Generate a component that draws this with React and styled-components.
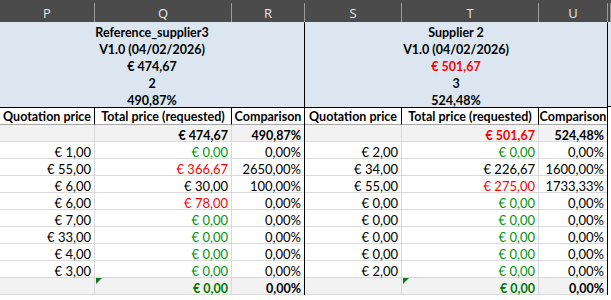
import React from "react";
import styled, { createGlobalStyle } from "styled-components";

const GlobalStyle = createGlobalStyle`
    * {
        box-sizing: border-box;
    }
    body {
        margin: 0;
        background: #ffffff;
        font-family: Lato, "Liberation Sans", Arial, sans-serif;
        font-size: 13px;
        color: #000000;
        overflow: hidden;
    }
`;

const Sheet = styled.div`
    width: 611px;
    height: 300px;
    background: #ffffff;
    overflow: hidden;
`;

const ColumnBar = styled.div`
    display: grid;
    grid-template-columns: 95px 137px 73px 97px 137px 69px 3px;
    height: 22px;
    background: #4b4b4b;
`;

const ColumnLetter = styled.div`
    display: flex;
    align-items: center;
    justify-content: center;
    color: #e6e6e6;
    font-family: "Open Sans", "Liberation Sans", sans-serif;
    font-size: 13px;
    border-right: 1px solid #9c9c9c;
    margin-top: 3px;
    height: 19px;
`;

const Body = styled.div`
    display: flex;
`;

const Group = styled.div`
    display: grid;
    grid-template-columns: ${p => p.$cols};
    border-right: 1px solid #000000;
`;

const Banner = styled.div`
    grid-column: 1 / -1;
    background: #dce6f1;
    border-bottom: 1px solid #000000;
    display: flex;
    flex-direction: column;
`;

const BannerLine = styled.div`
    height: 17px;
    line-height: 17px;
    text-align: center;
    font-weight: bold;
    font-size: 12.5px;
    color: ${p => (p.$red ? "#ff0000" : "#000000")};
    padding-top: 2px;
`;

const HeadCell = styled.div`
    height: 17px;
    line-height: 16px;
    font-weight: bold;
    font-size: 12.5px;
    text-align: center;
    white-space: nowrap;
    overflow: hidden;
    padding-top: 1px;
    border-right: ${p => (p.$last ? "none" : "1px solid #000000")};
    border-bottom: 1px solid #a6a6a6;
`;

const Cell = styled.div`
    height: 17px;
    line-height: 17px;
    padding: 2px 3px 0 3px;
    text-align: right;
    white-space: nowrap;
    position: relative;
    font-weight: ${p => (p.$bold ? "bold" : "normal")};
    font-size: ${p => (p.$bold ? "12.5px" : "13px")};
    background: ${p => (p.$shade ? "#f2f2f2" : "#ffffff")};
    border-bottom: 1px solid #d9d9d9;
    border-right: ${p => (p.$last ? "none" : "1px solid #d9d9d9")};
    color: ${p =>
        p.$tone === "red"
            ? "#ff0000"
            : p.$tone === "green"
            ? p.$bold
                ? "#007a00"
                : "#00960c"
            : "#000000"};
`;

const Flag = styled.span`
    position: absolute;
    left: 1px;
    top: 0;
    width: 0;
    height: 0;
    border-top: 6px solid #0c7a1c;
    border-right: 6px solid transparent;
`;

const Stub = styled.div`
    flex: 1;
`;

const StubBlue = styled.div`
    height: 85px;
    background: #dce6f1;
    border-bottom: 1px solid #000000;
`;

const groups = [
    {
        cols: "95px 137px 72px",
        banner: ["Reference_supplier3", "V1.0 (04/02/2026)", "€ 474,67", "2", "490,87%"],
        redTotal: false,
        total: "€ 474,67",
        totalPct: "490,87%",
        rows: [
            ["€ 1,00", "€ 0,00", "green", "0,00%"],
            ["€ 55,00", "€ 366,67", "red", "2650,00%"],
            ["€ 6,00", "€ 30,00", "", "100,00%"],
            ["€ 6,00", "€ 78,00", "red", "0,00%"],
            ["€ 7,00", "€ 0,00", "green", "0,00%"],
            ["€ 33,00", "€ 0,00", "green", "0,00%"],
            ["€ 4,00", "€ 0,00", "green", "0,00%"],
            ["€ 3,00", "€ 0,00", "green", "0,00%"],
        ],
    },
    {
        cols: "97px 137px 68px",
        banner: ["Supplier 2", "V1.0 (04/02/2026)", "€ 501,67", "3", "524,48%"],
        redTotal: true,
        total: "€ 501,67",
        totalPct: "524,48%",
        rows: [
            ["€ 2,00", "€ 0,00", "green", "0,00%"],
            ["€ 34,00", "€ 226,67", "", "1600,00%"],
            ["€ 55,00", "€ 275,00", "red", "1733,33%"],
            ["€ 0,00", "€ 0,00", "green", "0,00%"],
            ["€ 0,00", "€ 0,00", "green", "0,00%"],
            ["€ 0,00", "€ 0,00", "green", "0,00%"],
            ["€ 0,00", "€ 0,00", "green", "0,00%"],
            ["€ 2,00", "€ 0,00", "green", "0,00%"],
        ],
    },
];

function SupplierGroup({ group }) {
    return (
        <Group $cols={group.cols}>
            <Banner>
                {group.banner.map((line, i) => (
                    <BannerLine key={i} $red={i === 2 && group.redTotal}>
                        {line}
                    </BannerLine>
                ))}
            </Banner>
            <HeadCell>Quotation price</HeadCell>
            <HeadCell>Total price (requested)</HeadCell>
            <HeadCell $last>Comparison</HeadCell>

            <Cell $shade />
            <Cell $shade $bold $tone={group.redTotal ? "red" : ""}>
                {group.total}
            </Cell>
            <Cell $shade $bold $last>
                {group.totalPct}
            </Cell>

            {group.rows.map((row, i) => (
                <React.Fragment key={i}>
                    <Cell>{row[0]}</Cell>
                    <Cell $tone={row[2]}>{row[1]}</Cell>
                    <Cell $last>{row[3]}</Cell>
                </React.Fragment>
            ))}

            <Cell $shade />
            <Cell $shade $bold $tone="green">
                <Flag />€ 0,00
            </Cell>
            <Cell $shade $bold $last>
                0,00%
            </Cell>
        </Group>
    );
}

export default function App() {
    const letters = ["P", "Q", "R", "S", "T", "U", ""];
    return (
        <Sheet>
            <GlobalStyle />
            <ColumnBar>
                {letters.map((l, i) => (
                    <ColumnLetter key={i}>{l}</ColumnLetter>
                ))}
            </ColumnBar>
            <Body>
                {groups.map((g, i) => (
                    <SupplierGroup key={i} group={g} />
                ))}
                <Stub>
                    <StubBlue />
                </Stub>
            </Body>
        </Sheet>
    );
}
